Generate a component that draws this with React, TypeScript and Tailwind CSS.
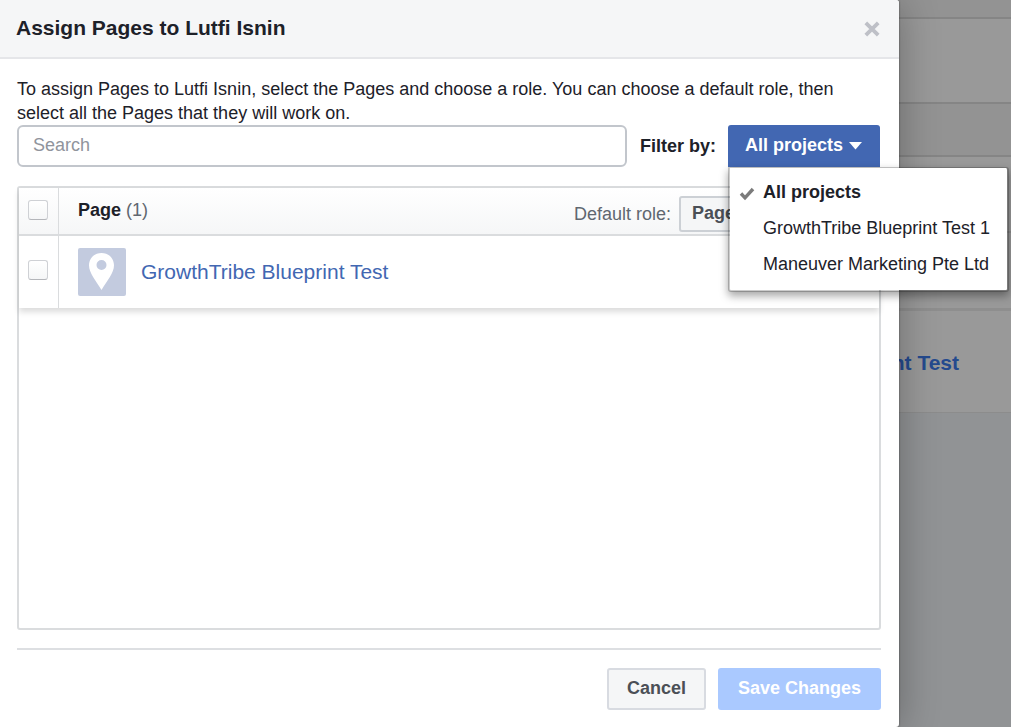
import { useState } from "react";

const projects = ["All projects", "GrowthTribe Blueprint Test 1", "Maneuver Marketing Pte Ltd"];

function CheckBox({ label }: { label: string }) {
  return (
    <input
      type="checkbox"
      aria-label={label}
      className="block h-5 w-5 appearance-none rounded-[3px] border border-[#cfd1d5] border-b-[#b4b6ba] bg-gradient-to-b from-white to-[#f5f6f7] checked:bg-[#4267b2]"
    />
  );
}

function Backdrop() {
  return (
    <div className="flex flex-col overflow-hidden bg-[#919395] [grid-area:1/1]" aria-hidden="true">
      <div className="h-[19px] border-b-2 border-[#858585] bg-[#939393]" />
      <div className="h-[85px] border-b-2 border-[#858585] bg-[#999999]" />
      <div className="h-[53px] border-b-2 border-[#858585] bg-[#939393]" />
      <div className="h-[76px] border-b-2 border-[#8c8c8c] bg-[#999999]" />
      <div className="h-[78px] border-b-[3px] border-[#8e8e8e] bg-[#999999]" />
      <div className="flex h-[102px] items-center justify-end border-b border-[#8c8c8c] bg-[#999999] pt-0.5 pr-[52px] text-[21px] font-bold text-[#244a8e]">
        GrowthTribe Blueprint Test
      </div>
    </div>
  );
}

function ProjectFilter() {
  const [open, setOpen] = useState(true);
  const [selected, setSelected] = useState(projects[0]);
  return (
    <div className="relative">
      <button
        type="button"
        id="project-filter"
        aria-haspopup="listbox"
        aria-expanded={open}
        onClick={() => setOpen(!open)}
        className="flex h-[42px] items-center gap-1.5 rounded-t-[3px] bg-[#4267b2] px-[17px] pb-0.5 font-bold text-white"
      >
        {selected}
        <svg viewBox="0 0 14 8" className="mt-0.5 h-2 w-3.5" fill="currentColor" aria-hidden="true">
          <path d="M0 0h13L6.5 7.500z" />
        </svg>
      </button>
      {open && (
        <ul
          role="listbox"
          aria-labelledby="project-filter"
          className="absolute top-[42px] left-0 z-10 rounded-b-[3px] rounded-tr-[3px] border-2 border-t border-black/20 bg-white bg-clip-padding pt-1.5 pb-2 whitespace-nowrap shadow-[0_4px_9px_rgba(0,0,0,0.35)]"
        >
          {projects.map((name) => (
            <li key={name} role="option" aria-selected={name === selected}>
              <button
                type="button"
                onClick={() => setSelected(name)}
                className={
                  "flex h-9 w-full items-center gap-2 pr-[17px] pl-[9px] text-left " +
                  (name === selected ? "font-bold" : "")
                }
              >
                <svg
                  viewBox="0 0 16 14"
                  className={"mt-1 h-3.5 w-4 " + (name === selected ? "" : "invisible")}
                  fill="none"
                  stroke="#7b7b7b"
                  strokeWidth="3.4"
                  aria-hidden="true"
                >
                  <path d="M2 6.500l4 4.300L14 2" />
                </svg>
                {name}
              </button>
            </li>
          ))}
        </ul>
      )}
    </div>
  );
}

export default function App() {
  return (
    <div className="grid min-h-screen grid-cols-1 overflow-hidden font-['Liberation_Sans',Arial,sans-serif] text-[18px] leading-6 text-[#1d2129]">
      <Backdrop />
      <main
        role="dialog"
        aria-labelledby="dialog-title"
        className="relative mr-28 flex flex-col rounded-r-[3px] bg-white shadow-[0_3px_40px_rgba(0,0,0,0.3),0_0_2px_rgba(0,0,0,0.5)] [grid-area:1/1]"
      >
        <header className="flex h-[59px] items-center justify-between rounded-tr-[3px] border-b-2 border-[#e5e6e9] bg-[#f5f6f7] pr-[19px] pl-4">
          <h1 id="dialog-title" className="pb-0.5 text-[21px] font-bold">Assign Pages to Lutfi Isnin</h1>
          <button type="button" aria-label="Close" className="text-[#bec0c7]">
            <svg viewBox="0 0 16 16" className="h-4 w-4" fill="none" stroke="currentColor" strokeWidth="3.8" aria-hidden="true">
              <path d="M1.800 1.800l12.400 12.400M14.200 1.800L1.800 14.200" />
            </svg>
          </button>
        </header>

        <div className="flex flex-1 flex-col pt-[18px] pr-[18px] pb-[17px] pl-[17px]">
          <p className="mr-[18px]">
            To assign Pages to Lutfi Isnin, select the Pages and choose a role. You can choose a default role, then
            select all the Pages that they will work on.
          </p>

          <div className="flex items-center pr-px">
            <input
              type="search"
              aria-label="Search"
              placeholder="Search"
              className="h-[42px] min-w-0 flex-1 rounded-md border-2 border-[#c2c6cc] bg-white px-3.5 pb-0.5 placeholder:text-[#90949c]"
            />
            <label htmlFor="project-filter" className="mr-3 ml-[13px] font-bold">Filter by:</label>
            <ProjectFilter />
          </div>

          <div className="mt-[19px] flex-1 rounded-[3px] border-2 border-[#dadcde]">
            <table className="w-full border-separate border-spacing-0 shadow-[0_4px_6px_rgba(0,0,0,0.14)]">
              <thead>
                <tr className="h-12 bg-gradient-to-b from-white to-[#f5f6f7]">
                  <th className="w-10 border-r border-b-2 border-[#dadcde] p-0 pb-0.5 pl-[9px]">
                    <CheckBox label="Select all pages" />
                  </th>
                  <th className="border-b-2 border-[#dadcde] p-0 pl-[19px]">
                    <div className="flex items-center justify-between pr-2 font-normal">
                      <span className="pb-0.5 text-[#606770]">
                        <b className="text-[#1d2129]">Page</b> (1)
                      </span>
                      <div className="flex items-center gap-2 pt-1.5">
                        <label htmlFor="default-role" className="text-[#606770]">Default role:</label>
                        <select
                          id="default-role"
                          className="h-9 w-48 appearance-none rounded-[3px] border-2 border-[#ccd0d5] bg-[#f5f6f7] px-[11px] pb-0.5 font-bold text-[#4b4f56]"
                        >
                          <option>Page</option>
                        </select>
                      </div>
                    </div>
                  </th>
                </tr>
              </thead>
              <tbody>
                <tr className="h-[72px]">
                  <td className="border-r border-[#dadcde] p-0 pb-1 pl-[9px]">
                    <CheckBox label="Select GrowthTribe Blueprint Test" />
                  </td>
                  <td className="p-0 pl-[19px]">
                    <div className="flex items-center gap-[15px]">
                      <svg viewBox="0 0 48 48" className="h-12 w-12 rounded-[2px] bg-[#c3cbdf]" aria-hidden="true">
                        <path
                          fill="#fff"
                          fillRule="evenodd"
                          d="M23.500 5C16.200 5 11 10.500 11 17.300c0 7.800 6.800 15.200 12.500 24.700C29.200 32.500 36 25.100 36 17.300 36 10.500 30.800 5 23.500 5zm0 7a5 5 0 1 1 0 10 5 5 0 0 1 0-10z"
                        />
                      </svg>
                      <a href="#page" className="text-[21px] text-[#4267b2]">GrowthTribe Blueprint Test</a>
                    </div>
                  </td>
                </tr>
              </tbody>
            </table>
          </div>

          <footer className="mt-[18px] flex justify-end gap-3 border-t-2 border-[#dddfe2] pt-[18px] font-bold">
            <button type="button" className="h-[42px] rounded-[3px] border-2 border-[#d8dbe1] bg-[#f5f6f7] px-[18px] pb-0.5 text-[#4b4f56]">
              Cancel
            </button>
            <button type="button" disabled className="h-[42px] rounded-[3px] bg-[#aac9ff] px-5 pb-0.5 text-white">
              Save Changes
            </button>
          </footer>
        </div>
      </main>
    </div>
  );
}
